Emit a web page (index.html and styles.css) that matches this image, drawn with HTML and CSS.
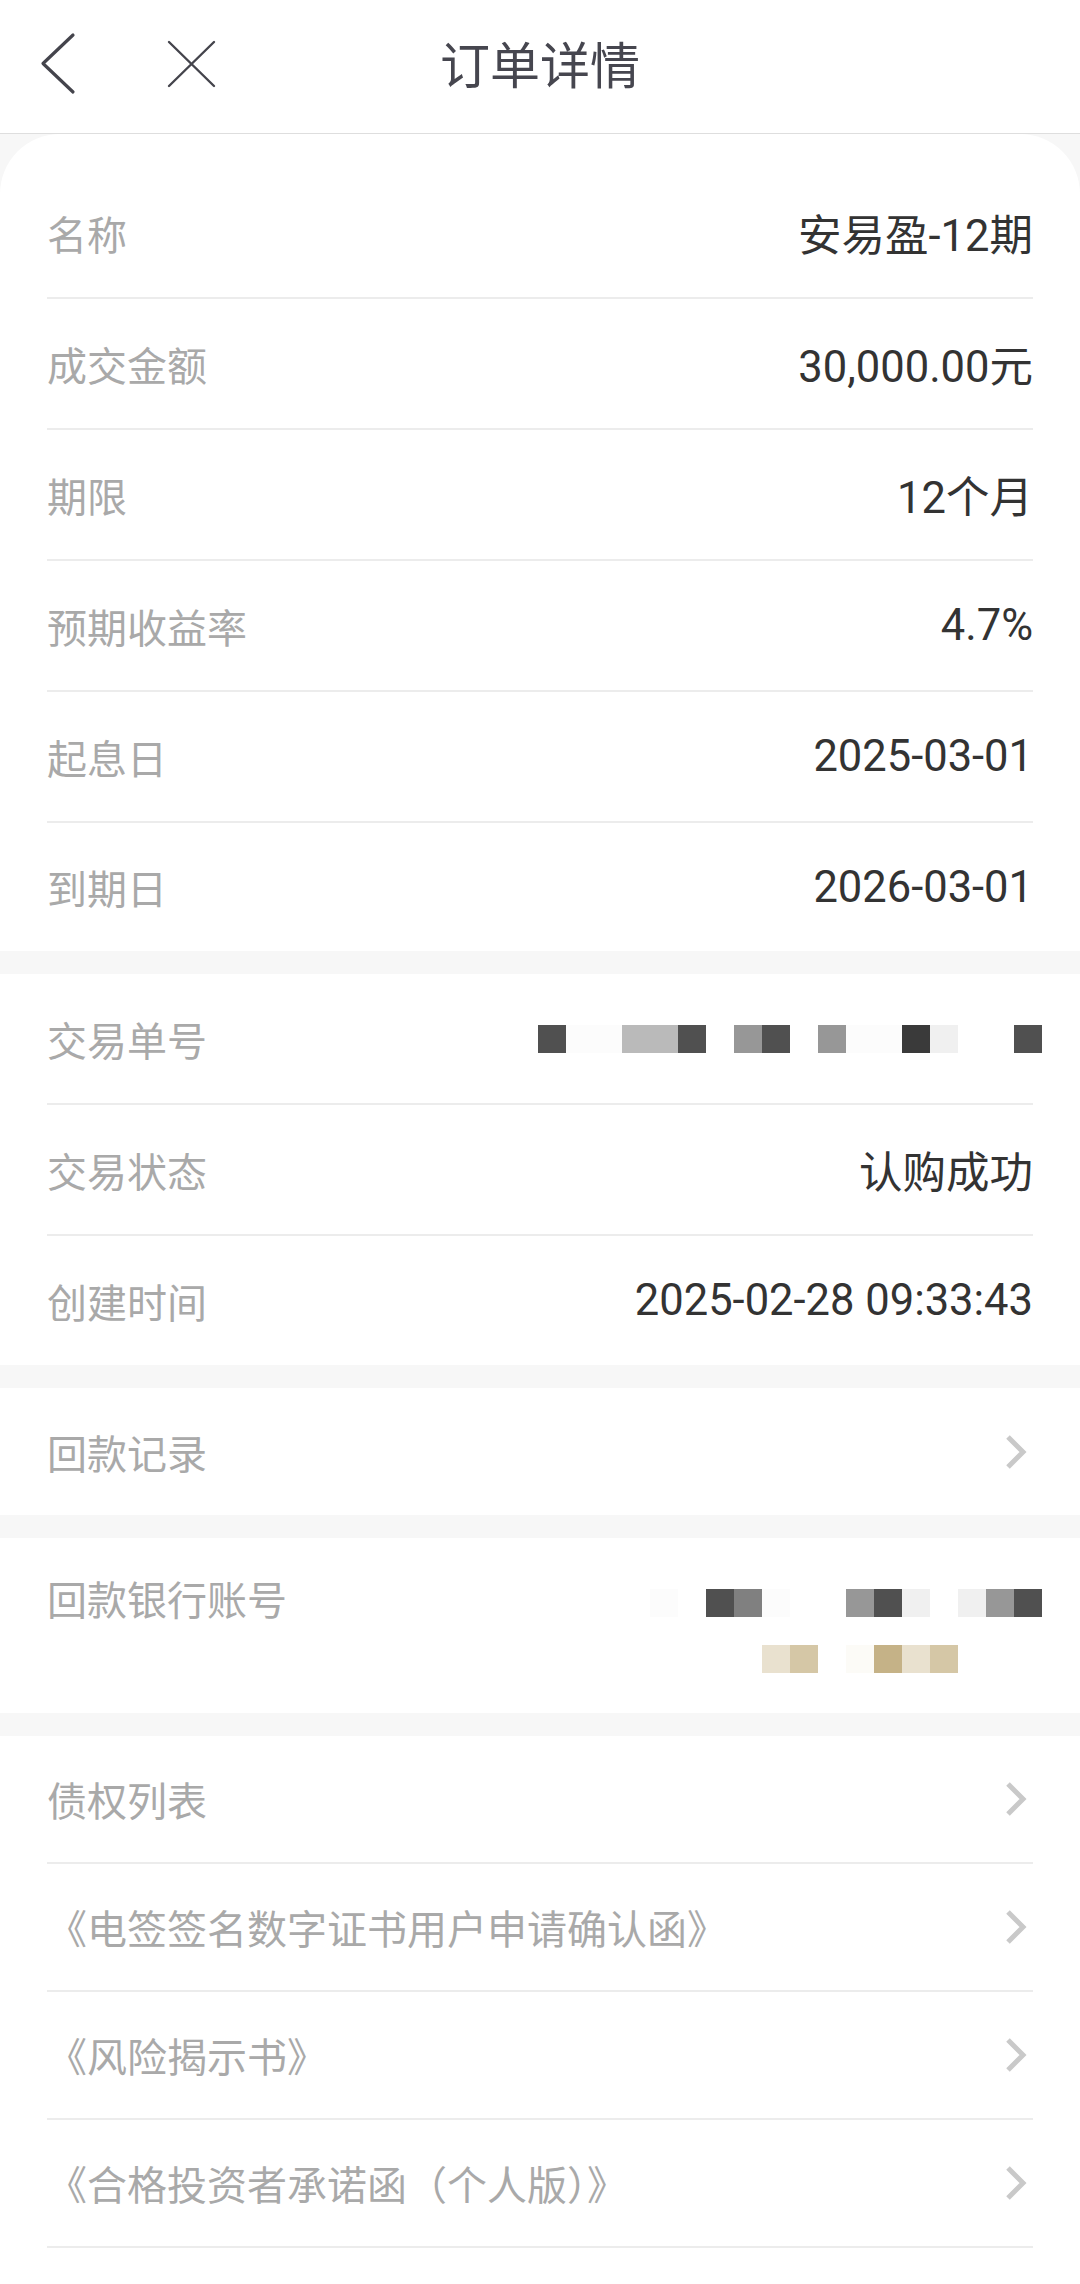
FILE: index.html
```html
<!DOCTYPE html>
<html lang="zh-CN">
<head>
    <meta charset="UTF-8">
    <meta name="viewport" content="width=device-width, initial-scale=1.0">
    <title>订单详情</title>
    <link rel="stylesheet" href="styles.css">
</head>
<body>
    <header class="nav">
        <div class="nav-icons">
            <svg class="icon-back" width="40" height="64" viewBox="0 0 40 64">
                <path d="M35 3 L5 31.5 L35 60" />
            </svg>
            <svg class="icon-close" width="50" height="50" viewBox="0 0 50 50">
                <path d="M3 3 L48 47 M48 3 L3 47" />
            </svg>
        </div>
        <h1 class="nav-title">订单详情</h1>
        <div></div>
    </header>

    <section class="section section-first">
        <div class="row"><span class="label">名称</span><span class="value">安易盈-12期</span></div>
        <div class="row"><span class="label">成交金额</span><span class="value">30,000.00元</span></div>
        <div class="row"><span class="label">期限</span><span class="value">12个月</span></div>
        <div class="row"><span class="label">预期收益率</span><span class="value">4.7%</span></div>
        <div class="row"><span class="label">起息日</span><span class="value">2025-03-01</span></div>
        <div class="row"><span class="label">到期日</span><span class="value">2026-03-01</span></div>
    </section>

    <section class="section">
        <div class="row">
            <span class="label">交易单号</span>
            <!-- number is pixelated in the screenshot -->
            <div class="mosaic cols-18">
                <i class="c6"></i><i class="c0"></i><i class="c0"></i><i class="c2"></i><i class="c2"></i><i class="c6"></i>
                <i></i><i class="c3"></i><i class="c6"></i><i></i><i class="c3"></i><i class="c0"></i>
                <i class="c0"></i><i class="c7"></i><i class="c1"></i><i></i><i></i><i class="c6"></i>
            </div>
        </div>
        <div class="row"><span class="label">交易状态</span><span class="value">认购成功</span></div>
        <div class="row"><span class="label">创建时间</span><span class="value">2025-02-28 09:33:43</span></div>
    </section>

    <section class="section">
        <div class="row link-row single">
            <span class="label">回款记录</span>
            <svg class="chevron" width="24" height="36" viewBox="0 0 24 36"><path d="M4 3 L19 18 L4 33" /></svg>
        </div>
    </section>

    <section class="section">
        <div class="row bank-row">
            <span class="label">回款银行账号</span>
            <div class="mosaic cols-14 rows-3">
                <i class="c0"></i><i></i><i class="c6"></i><i class="c4"></i><i class="c0"></i><i></i><i></i>
                <i class="c3"></i><i class="c6"></i><i class="c1"></i><i></i><i class="c1"></i><i class="c3"></i><i class="c6"></i>

                <i></i><i></i><i></i><i></i><i></i><i></i><i></i><i></i><i></i><i></i><i></i><i></i><i></i><i></i>

                <i></i><i></i><i></i><i></i><i class="g1"></i><i class="g2"></i><i></i>
                <i class="g0"></i><i class="g3"></i><i class="g1"></i><i class="g2"></i><i></i><i></i><i></i>
            </div>
        </div>
    </section>

    <section class="section section-last">
        <div class="row link-row">
            <span class="label">债权列表</span>
            <svg class="chevron" width="24" height="36" viewBox="0 0 24 36"><path d="M4 3 L19 18 L4 33" /></svg>
        </div>
        <div class="row link-row">
            <span class="label">《电签签名数字证书用户申请确认函》</span>
            <svg class="chevron" width="24" height="36" viewBox="0 0 24 36"><path d="M4 3 L19 18 L4 33" /></svg>
        </div>
        <div class="row link-row">
            <span class="label">《风险揭示书》</span>
            <svg class="chevron" width="24" height="36" viewBox="0 0 24 36"><path d="M4 3 L19 18 L4 33" /></svg>
        </div>
        <div class="row link-row">
            <span class="label">《合格投资者承诺函（个人版）》</span>
            <svg class="chevron" width="24" height="36" viewBox="0 0 24 36"><path d="M4 3 L19 18 L4 33" /></svg>
        </div>
    </section>
</body>
</html>
```

FILE: styles.css
```css
body {
    margin: 0;
    background-color: #f7f7f7;
    font-family: Roboto, "Noto Sans CJK SC", sans-serif;
    font-size: 42px;
    color: #333;
}

/* top bar */
.nav {
    display: grid;
    grid-template-columns: 1fr auto 1fr;
    align-items: center;
    box-sizing: border-box;
    height: 134px;
    padding-bottom: 5px;
    background-color: #fff;
    border-bottom: 1px solid #dedede;
}
.nav-icons { display: flex; align-items: center; gap: 88px; padding-left: 38px; }
.nav-icons svg { display: block; fill: none; stroke: #44444c; }
.icon-back path { stroke-width: 3.2; stroke-linecap: round; stroke-linejoin: round; }
.icon-close path { stroke-width: 2.4; stroke-linecap: round; }
.nav-title {
    margin: 0 0 5px;
    font-size: 50px;
    font-weight: normal;
    color: #46464f;
    font-family: "Noto Sans CJK SC", sans-serif;
}

/* white blocks */
.section { background-color: #fff; margin-top: 23px; }
.section-first { margin-top: 0; padding-top: 34px; border-radius: 60px 60px 0 0; }
.section-last { padding-bottom: 60px; }

.row {
    display: flex;
    justify-content: space-between;
    align-items: center;
    height: 129px;
    margin: 0 47px;
    border-bottom: 2px solid #ececec;
}
.row:last-child { border-bottom: none; }
.section-first .row:last-child { height: 128px; }
.label { color: #a9a9a9; font-size: 40px; }
.value { color: #333; font-size: 43.5px; }

.link-row { height: 126px; }
.link-row:last-child { border-bottom: 2px solid #ececec; }
.link-row.single { height: 127px; border-bottom: none; }
.chevron { display: block; margin-right: 5px; fill: none; stroke: #c9c9c9; stroke-width: 5; }

.bank-row {
    height: auto;
    align-items: flex-start;
    padding: 39px 0 40px;
}
.bank-row .label { line-height: 50px; }

/* pixelated numbers */
.mosaic { display: grid; grid-auto-rows: 28px; margin-right: -9px; }
.cols-18 { grid-template-columns: repeat(18, 28px); }
.cols-14 { grid-template-columns: repeat(14, 28px); }
.bank-row .mosaic { margin-top: 12px; }
.mosaic i { display: block; }
.c0 { background-color: #fcfcfc; }
.c1 { background-color: #f0f0f0; }
.c2 { background-color: #bababa; }
.c3 { background-color: #979797; }
.c4 { background-color: #808080; }
.c6 { background-color: #505050; }
.c7 { background-color: #3a3a3a; }
.g0 { background-color: #fcfbf7; }
.g1 { background-color: #e9e1cf; }
.g2 { background-color: #d5c7a6; }
.g3 { background-color: #c5b287; }
```
